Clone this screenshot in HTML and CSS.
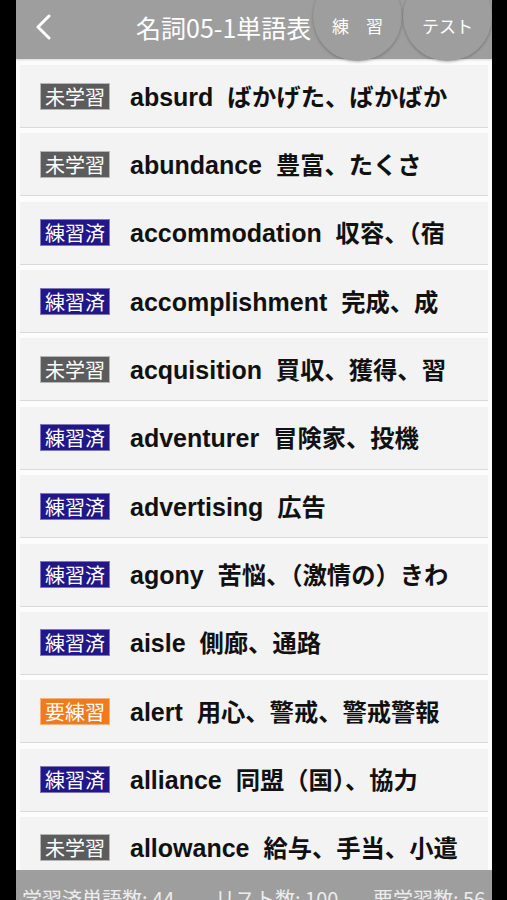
FILE: index.html
```html
<!DOCTYPE html>
<html lang="ja">
<head>
    <meta charset="UTF-8">
    <meta name="viewport" content="width=device-width, initial-scale=1.0">
    <title>名詞05-1単語表</title>
    <link rel="stylesheet" href="styles.css">
</head>
<body>
    <div class="screen">
        <div class="nav-bar">
            <svg class="back" width="16" height="26" viewBox="0 0 16 26">
                <polyline points="13,2 2,13 13,24" fill="none" stroke="#fff" stroke-width="3" stroke-linecap="round" stroke-linejoin="round"/>
            </svg>
            <div class="nav-title">名詞05-1単語表</div>
            <div class="round-btn practice"><span>練　習</span></div>
            <div class="round-btn test"><span>テスト</span></div>
        </div>

        <div class="word-list" id="word-list">
            <!-- rows -->
        </div>

        <div class="status-bar">
            <span class="stat stat-learned">学習済単語数: 44</span>
            <span class="stat stat-total">リスト数: 100</span>
            <span class="stat">要学習数: 56</span>
        </div>
    </div>

    <script>
        const words = [
            { state: "new", word: "absurd", meaning: "ばかげた、ばかばか" },
            { state: "new", word: "abundance", meaning: "豊富、たくさ" },
            { state: "done", word: "accommodation", meaning: "収容、（宿" },
            { state: "done", word: "accomplishment", meaning: "完成、成" },
            { state: "new", word: "acquisition", meaning: "買収、獲得、習" },
            { state: "done", word: "adventurer", meaning: "冒険家、投機" },
            { state: "done", word: "advertising", meaning: "広告" },
            { state: "done", word: "agony", meaning: "苦悩、（激情の）きわ" },
            { state: "done", word: "aisle", meaning: "側廊、通路" },
            { state: "todo", word: "alert", meaning: "用心、警戒、警戒警報" },
            { state: "done", word: "alliance", meaning: "同盟（国）、協力" },
            { state: "new", word: "allowance", meaning: "給与、手当、小遣" }
        ];

        const labels = { new: "未学習", done: "練習済", todo: "要練習" };

        function loadWords() {
            const list = document.getElementById("word-list");
            list.innerHTML = "";

            words.forEach((item) => {
                const row = document.createElement("div");
                row.className = "word-row";

                const badge = document.createElement("span");
                badge.className = "badge badge-" + item.state;
                badge.innerText = labels[item.state];

                const text = document.createElement("div");
                text.className = "word-text";
                const en = document.createElement("span");
                en.textContent = item.word + "  ";
                const ja = document.createElement("span");
                ja.className = "meaning";
                ja.textContent = item.meaning;
                text.appendChild(en);
                text.appendChild(ja);

                row.appendChild(badge);
                row.appendChild(text);
                list.appendChild(row);
            });
        }

        loadWords();
    </script>
</body>
</html>
```

FILE: styles.css
```css
body {
    margin: 0;
    background-color: #000;
    font-family: "Liberation Sans", "Noto Sans CJK JP", sans-serif;
}
.screen {
    width: 476px;
    height: 900px;
    margin-left: 16px;
    display: flex;
    flex-direction: column;
    overflow: hidden;
    background-color: #fcfcfc;
    position: relative;
}
.nav-bar {
    height: 59px;
    flex-shrink: 0;
    background-color: #9e9e9e;
    display: flex;
    align-items: center;
    padding-left: 20px;
    position: relative;
    z-index: 2;
    box-shadow: 0 1px 2px rgba(0, 0, 0, 0.15);
}
.back {
    margin-top: -5px;
}
.nav-title {
    margin-left: 84px;
    margin-top: -6px;
    color: #fff;
    font-family: "Noto Sans CJK JP", sans-serif;
    font-size: 25px;
    line-height: 36px;
}
.round-btn {
    position: absolute;
    top: -28px;
    width: 89px;
    height: 89px;
    border-radius: 50%;
    background-color: #9e9e9e;
    box-shadow: 0 1px 3px rgba(0, 0, 0, 0.28);
    color: #fff;
    font-family: "Noto Sans CJK JP", sans-serif;
    font-size: 17px;
    display: flex;
    justify-content: center;
    padding-top: 41px;
    box-sizing: border-box;
    line-height: 26px;
}
.practice {
    left: 297px;
}
.test {
    left: 387px;
}
.word-list {
    flex: 1;
    overflow: hidden;
    padding-top: 6px;
}
.word-row {
    height: 62px;
    margin: 0 4px 5.36px 4px;
    background-color: #f3f3f3;
    border-bottom: 1px solid #d9d9d9;
    display: flex;
    align-items: center;
    padding-left: 20px;
    padding-right: 22px;
}
.badge {
    flex-shrink: 0;
    width: 70px;
    height: 27px;
    box-sizing: border-box;
    border: 1px solid #b5b5b5;
    color: #fff;
    font-family: "Noto Sans CJK JP", sans-serif;
    font-size: 20px;
    line-height: 25px;
    text-align: center;
    display: flex;
    align-items: center;
    justify-content: center;
}
.badge-new {
    background-color: #5c5c5c;
}
.badge-done {
    background-color: #211788;
    border-color: #7e78bb;
}
.badge-todo {
    background-color: #f07a1c;
    border-color: #f5b27c;
}
.word-text {
    flex: 1;
    margin-left: 20px;
    white-space: pre;
    font-size: 25px;
    font-weight: bold;
    line-height: 40px;
    color: #111;
}
.meaning {
    font-family: "Noto Sans CJK JP", sans-serif;
    font-size: 24.3px;
}
.status-bar {
    height: 30px;
    flex-shrink: 0;
    background-color: #9e9e9e;
    display: flex;
    padding: 17px 0 0 6px;
    box-sizing: border-box;
    color: #ececec;
    font-family: "Noto Sans CJK JP", sans-serif;
    font-size: 20px;
    line-height: 24px;
    overflow: hidden;
    white-space: nowrap;
}
.stat-learned {
    width: 193px;
}
.stat-total {
    width: 158px;
}
```
